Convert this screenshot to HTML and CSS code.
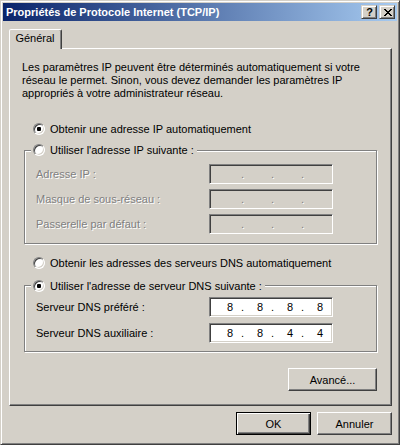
FILE: index.html
```html
<!DOCTYPE html>
<html lang="fr">
<head>
<meta charset="utf-8">
<title>Propriétés de Protocole Internet (TCP/IP)</title>
<link rel="stylesheet" href="styles.css">
</head>
<body>
<div class="window">
  <div class="titlebar">
    <span class="title">Propriétés de Protocole Internet (TCP/IP)</span>
    <div class="caption-buttons">
      <div class="cap-btn help">?</div>
      <div class="cap-btn close">
        <svg width="8" height="7" viewBox="0 0 8 7" shape-rendering="crispEdges"><path fill="#000" d="M0 0h2v1H0zM6 0h2v1H6zM1 1h2v1H1zM5 1h2v1H5zM2 2h4v1H2zM3 3h2v1H3zM2 4h4v1H2zM1 5h2v1H1zM5 5h2v1H5zM0 6h2v1H0zM6 6h2v1H6z"/></svg>
      </div>
    </div>
  </div>
  <div class="body">
    <div class="tabs"><div class="tab">Général</div></div>
    <div class="panel">
      <p class="intro">Les paramètres IP peuvent être déterminés automatiquement si votre<br>réseau le permet. Sinon, vous devez demander les paramètres IP<br>appropriés à votre administrateur réseau.</p>

      <div class="radio-row first"><span class="radio checked"></span><span>Obtenir une adresse IP automatiquement</span></div>

      <fieldset class="group group-ip">
        <legend><span class="radio-row in-legend"><span class="radio"></span><span>Utiliser l'adresse IP suivante :</span></span></legend>
        <div class="field-row disabled first-field">
          <span class="label">Adresse IP :</span>
          <span class="ipbox off"><span class="seg"></span><span class="dot">.</span><span class="seg"></span><span class="dot">.</span><span class="seg"></span><span class="dot">.</span><span class="seg"></span></span>
        </div>
        <div class="field-row disabled">
          <span class="label">Masque de sous-réseau :</span>
          <span class="ipbox off"><span class="seg"></span><span class="dot">.</span><span class="seg"></span><span class="dot">.</span><span class="seg"></span><span class="dot">.</span><span class="seg"></span></span>
        </div>
        <div class="field-row disabled">
          <span class="label">Passerelle par défaut :</span>
          <span class="ipbox off"><span class="seg"></span><span class="dot">.</span><span class="seg"></span><span class="dot">.</span><span class="seg"></span><span class="dot">.</span><span class="seg"></span></span>
        </div>
      </fieldset>

      <div class="radio-row dns-auto"><span class="radio"></span><span>Obtenir les adresses des serveurs DNS automatiquement</span></div>

      <fieldset class="group group-dns">
        <legend><span class="radio-row in-legend"><span class="radio checked"></span><span>Utiliser l'adresse de serveur DNS suivante :</span></span></legend>
        <div class="field-row first-field">
          <span class="label">Serveur DNS préféré :</span>
          <span class="ipbox"><span class="seg">8</span><span class="dot">.</span><span class="seg">8</span><span class="dot">.</span><span class="seg">8</span><span class="dot">.</span><span class="seg">8</span></span>
        </div>
        <div class="field-row dns-second">
          <span class="label">Serveur DNS auxiliaire :</span>
          <span class="ipbox"><span class="seg">8</span><span class="dot">.</span><span class="seg">8</span><span class="dot">.</span><span class="seg">4</span><span class="dot">.</span><span class="seg">4</span></span>
        </div>
      </fieldset>

      <div class="adv-row"><div class="btn adv">Avancé...</div></div>
    </div>
    <div class="dialog-buttons">
      <div class="btn default">OK</div>
      <div class="btn">Annuler</div>
    </div>
  </div>
</div>
</body>
</html>
```

FILE: styles.css
```css
* { box-sizing: border-box; }
html, body { margin: 0; padding: 0; }
body {
  font-family: "Liberation Sans", Arial, sans-serif;
  font-size: 11px;
  color: #000;
  background: #D4D0C8;
}

.window {
  width: 400px;
  height: 445px;
  background: #D4D0C8;
  border: 1px solid;
  border-color: #D4D0C8 #404040 #404040 #D4D0C8;
  box-shadow: inset 1px 1px 0 #fff, inset -1px -1px 0 #808080;
  padding: 2px;
  display: flex;
  flex-direction: column;
}

.titlebar {
  height: 18px;
  flex: none;
  background: linear-gradient(to right, #0A246A, #A6CAF0);
  display: flex;
  align-items: center;
  justify-content: space-between;
  padding: 0 2px 0 2px;
}
.title {
  color: #fff;
  font-weight: bold;
  font-size: 11px;
  line-height: 18px;
  padding-left: 1px;
  white-space: nowrap;
}
.caption-buttons { display: flex; gap: 2px; }
.cap-btn {
  width: 16px;
  height: 14px;
  background: #D4D0C8;
  border: 1px solid;
  border-color: #D4D0C8 #404040 #404040 #D4D0C8;
  box-shadow: inset 1px 1px 0 #fff, inset -1px -1px 0 #808080;
  display: flex;
  align-items: center;
  justify-content: center;
  font-weight: bold;
  font-size: 11px;
  line-height: 12px;
  color: #000;
}
.cap-btn.help { padding-left: 1px; }
.cap-btn svg { display: block; margin-left: 1px; }

.body {
  padding: 8px 5px 0 6px;
  display: flex;
  flex-direction: column;
}

.tabs {
  display: flex;
  height: 20px;
  margin-bottom: -1px;
  position: relative;
  z-index: 1;
}
.tab {
  width: 53px;
  height: 20px;
  background: #D4D0C8;
  border: 1px solid;
  border-bottom: none;
  border-color: #fff #404040 transparent #fff;
  box-shadow: inset -1px 0 0 #808080;
  border-radius: 2px 2px 0 0;
  text-align: center;
  line-height: 17px;
  padding-right: 1px;
}

.panel {
  height: 358px;
  border: 1px solid;
  border-color: #fff #404040 #404040 #fff;
  box-shadow: inset -1px -1px 0 #808080;
  padding: 12px 14px 0 12px;
}

.intro {
  margin: 0;
  line-height: 13px;
  white-space: nowrap;
}

.radio-row {
  display: flex;
  align-items: center;
  gap: 5px;
  height: 14px;
  line-height: 14px;
  white-space: nowrap;
}
.radio-row.first { margin: 22px 0 0 11px; }
.radio-row.dns-auto { margin: 12px 0 0 11px; }
.radio-row.in-legend { display: inline-flex; }

.radio {
  flex: none;
  width: 12px;
  height: 12px;
  border-radius: 50%;
  border: 1px solid;
  border-color: #808080 #fff #fff #808080;
  background: #fff;
  box-shadow: inset 1px 1px 0 #404040, inset -1px -1px 0 #D4D0C8;
  display: flex;
  align-items: center;
  justify-content: center;
}
.radio.checked::after {
  content: "";
  width: 4px;
  height: 4px;
  border-radius: 1px;
  background: #000;
}

.group {
  margin: 0 0 0 2px;
  padding: 0 0 8px 11px;
  border: 1px solid #808080;
  box-shadow: 1px 1px 0 #fff, inset 1px 1px 0 #fff;
  min-width: 0;
}
.group legend {
  margin-left: -5px;
  padding: 0 3px 0 2px;
  height: 14px;
  background: #D4D0C8;
}
.group-ip { margin-top: 7px; padding-bottom: 9px; }
.group-dns { margin-top: 8px; padding-bottom: 8px; }

.field-row {
  display: grid;
  grid-template-columns: 173px 124px;
  align-items: center;
  height: 20px;
  margin-top: 5px;
}
.group-ip .first-field { margin-top: 7px; }
.group-dns .first-field { margin-top: 5px; }
.dns-second { margin-top: 6px; }

.label { white-space: nowrap; }
.disabled .label { color: #808080; text-shadow: 1px 1px 0 #fff; }

.ipbox {
  width: 124px;
  height: 20px;
  display: flex;
  align-items: center;
  padding-left: 9px;
  border: 1px solid;
  border-color: #808080 #fff #fff #808080;
  box-shadow: inset 1px 1px 0 #404040, inset -1px -1px 0 #D4D0C8;
  background: #fff;
  line-height: 14px;
}
.ipbox .seg { width: 22px; text-align: center; }
.ipbox .dot { width: 8px; text-align: left; }
.ipbox.off { background: #D4D0C8; }
.ipbox.off .dot { color: #808080; text-shadow: 1px 1px 0 #fff; }

.adv-row {
  display: flex;
  justify-content: flex-end;
  margin-top: 16px;
}

.btn {
  width: 75px;
  height: 23px;
  background: #D4D0C8;
  border: 1px solid;
  border-color: #fff #404040 #404040 #fff;
  box-shadow: inset -1px -1px 0 #808080;
  display: flex;
  align-items: center;
  justify-content: center;
  color: #000;
  white-space: nowrap;
}
.btn.adv { width: 89px; }
.btn.default {
  border-color: #000;
  box-shadow: inset 1px 1px 0 #fff, inset -1px -1px 0 #404040, inset -2px -2px 0 #808080;
}

.dialog-buttons {
  display: flex;
  justify-content: flex-end;
  gap: 6px;
  margin-top: 6px;
}
```
